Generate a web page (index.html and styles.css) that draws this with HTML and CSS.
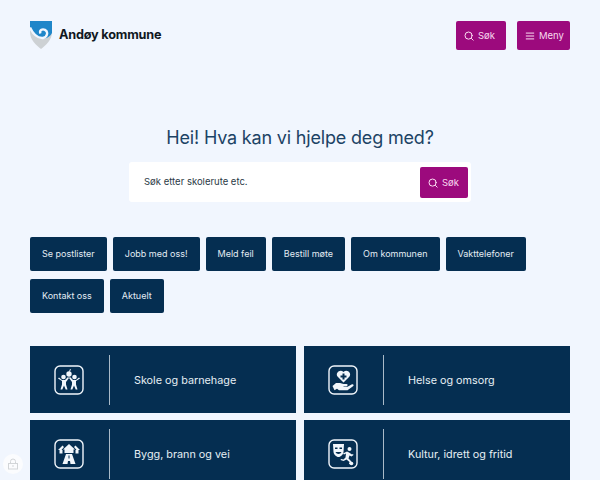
FILE: index.html
```html
<!DOCTYPE html>
<html lang="no">
<head>
<meta charset="utf-8">
<title>Andøy kommune</title>
<link rel="stylesheet" href="styles.css">
</head>
<body>
<header class="header">
  <a class="logo" href="#">
    <svg class="shield" viewBox="0 0 22 28" width="22" height="28" aria-hidden="true">
      <path d="M0 0H22V11C22 19 16 24 11 28C6 24 0 19 0 11Z" fill="#cdd1d4"/>
      <path d="M0 0H22V12C20 16 16 18 13 17C9 18 4 14 0 7Z" fill="#1f86c9"/>
      <path d="M0 6.500C3 13 8 17.500 13 17C17.500 16 18.500 10.500 15 8.800C12 7.500 9 9.500 10.500 12.500" fill="none" stroke="#f1f6fe" stroke-width="2.400"/>
    </svg>
    <span class="logo-text">Andøy kommune</span>
  </a>
  <div class="header-actions">
    <a class="btn btn-sok" href="#">
      <svg class="ic" viewBox="0 0 12 12" aria-hidden="true"><circle cx="5.500" cy="5.500" r="4.300"/><path d="M9 9l2 2"/></svg>
      <span>Søk</span>
    </a>
    <a class="btn btn-meny" href="#">
      <svg class="ic" viewBox="0 0 12 12" aria-hidden="true"><path d="M1.500 2.500h9M1.500 6h9M1.500 9.500h9"/></svg>
      <span>Meny</span>
    </a>
  </div>
</header>

<section class="hero">
  <h1>Hei! Hva kan vi hjelpe deg med?</h1>
  <form class="search">
    <span class="search-text">Søk etter skolerute etc.</span>
    <button class="btn search-btn" type="button">
      <svg class="ic" viewBox="0 0 12 12" aria-hidden="true"><circle cx="5.500" cy="5.500" r="4.300"/><path d="M9 9l2 2"/></svg>
      <span>Søk</span>
    </button>
  </form>
</section>

<nav class="chips">
  <a class="chip" href="#">Se postlister</a>
  <a class="chip" href="#">Jobb med oss!</a>
  <a class="chip" href="#">Meld feil</a>
  <a class="chip" href="#">Bestill møte</a>
  <a class="chip" href="#">Om kommunen</a>
  <a class="chip" href="#">Vakttelefoner</a>
  <a class="chip" href="#">Kontakt oss</a>
  <a class="chip" href="#">Aktuelt</a>
</nav>

<section class="tiles">
  <a class="tile" href="#">
    <span class="tile-icon">
      <svg viewBox="0 0 30 30" width="30" height="30" aria-hidden="true">
        <rect class="frame" x="1" y="1" width="28" height="28" rx="5"/>
        <circle class="solid" cx="15" cy="9" r="2.700"/>
        <path class="solid" d="M15 6.500l1-2.500 1 .5-1.500 2.500z"/>
        <circle class="solid" cx="9.500" cy="12" r="2.300"/>
        <circle class="solid" cx="20.500" cy="12" r="2.300"/>
        <path class="solid" d="M4 13.500l1-1 3 2.500h3l3-3 1 1-3 4v2.500l1.500 5h-1.800l-1.700-4-1.700 4h-1.800l1.500-5v-3.500zM26 13.500l-1-1-3 2.500h-3l-3-3-1 1 3 4v2.500l-1.500 5h1.800l1.700-4 1.700 4h1.800l-1.500-5v-3.500z"/>
      </svg>
    </span>
    <span class="tile-label">Skole og barnehage</span>
  </a>
  <a class="tile" href="#">
    <span class="tile-icon">
      <svg viewBox="0 0 30 30" width="30" height="30" aria-hidden="true">
        <rect class="frame" x="1" y="1" width="28" height="28" rx="5"/>
        <path class="solid" fill-rule="evenodd" d="M15.500 17.500l-6-6c-2.500-3.500 2.500-8 6-4.500c3.500-3.500 8.500 1 6 4.500zM14.500 8.500v2h-2v2h2v2h2v-2h2v-2h-2v-2z"/>
        <path class="solid" d="M4.500 21l3.500-3h4l3.500 1h3c1.500 0 1.500 2.200 0 2.200h-3v.6h4l4.500-2.500c1.500-.5 2.200 1 1 2l-5.500 4h-8.500l-2-1.500-2.500 1.500z"/>
      </svg>
    </span>
    <span class="tile-label">Helse og omsorg</span>
  </a>
  <a class="tile" href="#">
    <span class="tile-icon">
      <svg viewBox="0 0 30 30" width="30" height="30" aria-hidden="true">
        <rect class="frame" x="1" y="1" width="28" height="28" rx="5"/>
        <path class="solid" d="M15 5l6 5.500h-1.500v3.500h-9v-3.500h-1.500z"/>
        <path class="solid" d="M4 11l4.500-4.500 1.500 1.500-2.500 3h1v3.500h-3v-3.500zM26 11l-4.500-4.500-1.500 1.500 2.500 3h-1v3.500h3v-3.500z"/>
        <path class="solid" fill-rule="evenodd" d="M12 15h6l3.500 10h-5l-.5-3h-2l-.5 3h-5zM14.500 16.500v3h1v-3z"/>
      </svg>
    </span>
    <span class="tile-label">Bygg, brann og vei</span>
  </a>
  <a class="tile" href="#">
    <span class="tile-icon">
      <svg viewBox="0 0 30 30" width="30" height="30" aria-hidden="true">
        <rect class="frame" x="1" y="1" width="28" height="28" rx="5"/>
        <path class="solid" fill-rule="evenodd" d="M5 5h11l-.5 8c-.5 3.500-3.500 5-5 5S6 16.500 5.500 13zM7 8.500v1.500h2.500V8.500zM11.500 8.500v1.500h2.500V8.500zM7.500 13c1 2.500 5 2.500 6 0z"/>
        <circle class="solid" cx="21.500" cy="10" r="2"/>
        <path class="solid" d="M19 12.500l2 1 3 2 1-.5.500 1-2 1.500-2-1-1 3 3 3-1 3-1.500-.5.500-2-3-2.500-3 1.500-3-1 .5-1 2.500.5 2-2 .5-4-2 1-1-1z"/>
        <circle class="solid" cx="23.500" cy="24.500" r="1.800"/>
      </svg>
    </span>
    <span class="tile-label">Kultur, idrett og fritid</span>
  </a>
</section>

<button class="privacy" type="button" aria-label="Personvern">
  <svg viewBox="0 0 12 12" width="12" height="12" aria-hidden="true"><path d="M3.500 5.500V3.500a2.500 2.500 0 0 1 5 0v2"/><rect x="1.500" y="5.500" width="9" height="5.500"/><path d="M6 7v2"/></svg>
</button>
</body>
</html>
```
FILE: styles.css
```css
* { box-sizing: border-box; }
html, body { height: 480px; overflow: hidden; }
body {
  margin: 0;
  background: #f1f6fe;
  font-family: "Inter", "Noto Sans", sans-serif;
  color: #052e51;
}
a { color: inherit; text-decoration: none; }

.header {
  display: flex;
  justify-content: space-between;
  align-items: flex-start;
  padding: 21px 30px 0;
  height: 125px;
}
.logo { display: flex; align-items: center; gap: 7px; }
.shield { display: block; }
.logo-text { font-size: 12.700px; font-weight: 700; color: #10181f; letter-spacing: -.2px; margin-top: -2px; }
.header-actions { display: flex; gap: 11px; }

.btn {
  display: flex;
  align-items: center;
  gap: 4px;
  height: 29px;
  border: 0;
  border-radius: 2px;
  background: #9c0a7d;
  color: #f8d9ef;
  font-family: inherit;
  font-size: 9.500px;
  font-weight: 400;
}
.btn-sok { width: 50px; padding-left: 8px; }
.btn-meny { width: 53px; padding-left: 8px; }
.ic { width: 10px; height: 10px; fill: none; stroke: #fbdff3; stroke-width: 1.200; stroke-linecap: round; flex: none; }

.hero { display: flex; flex-direction: column; align-items: center; }
h1 {
  margin: 0 0 11px;
  font-size: 18px;
  line-height: 26px;
  font-weight: 400;
  letter-spacing: -.18px;
  color: #1c4365;
}
.search {
  display: flex;
  align-items: center;
  justify-content: space-between;
  width: 342px;
  height: 40px;
  padding: 0 3px 0 15px;
  background: #fff;
  border-radius: 3px;
}
.search-text { font-size: 9.500px; color: #2b3a46; margin-top: -2px; }
.search-btn { width: 48px; height: 31px; padding: 0 0 0 8px; margin-top: 1px; }

.chips {
  display: flex;
  flex-wrap: wrap;
  gap: 8px 6px;
  padding: 35px 30px 0;
}
.chip {
  display: flex;
  align-items: center;
  height: 34px;
  padding: 0 12px 1px;
  border-radius: 2px;
  background: #052e51;
  color: #e3ecf3;
  font-size: 9px;
  font-weight: 400;
}

.tiles {
  display: grid;
  grid-template-columns: 1fr 1fr;
  gap: 7px 8px;
  padding: 33px 30px 0;
}
.tile {
  display: flex;
  align-items: center;
  height: 67px;
  padding-top: 1px;
  background: #052e51;
  color: #e6eef4;
  font-size: 10.800px;
  font-weight: 400;
}
.tile-icon {
  display: flex;
  align-items: center;
  justify-content: center;
  width: 80px;
  height: 50px;
  margin-top: -1px;
  border-right: 1px solid #a9bac8;
  margin-right: 24px;
  flex: none;
}
.tile-icon svg { display: block; margin-left: -1px; }
.frame { fill: none; stroke: #f1f6fb; stroke-width: 1.400; }
.solid { fill: #f1f6fb; }

.privacy {
  position: fixed;
  left: 3px;
  bottom: 6px;
  width: 20px;
  height: 20px;
  padding: 0;
  border: 0;
  border-radius: 50%;
  background: #fbfcfe;
  display: flex;
  align-items: center;
  justify-content: center;
}
.privacy svg { fill: none; stroke: #d2d5d8; stroke-width: 1; }
```
